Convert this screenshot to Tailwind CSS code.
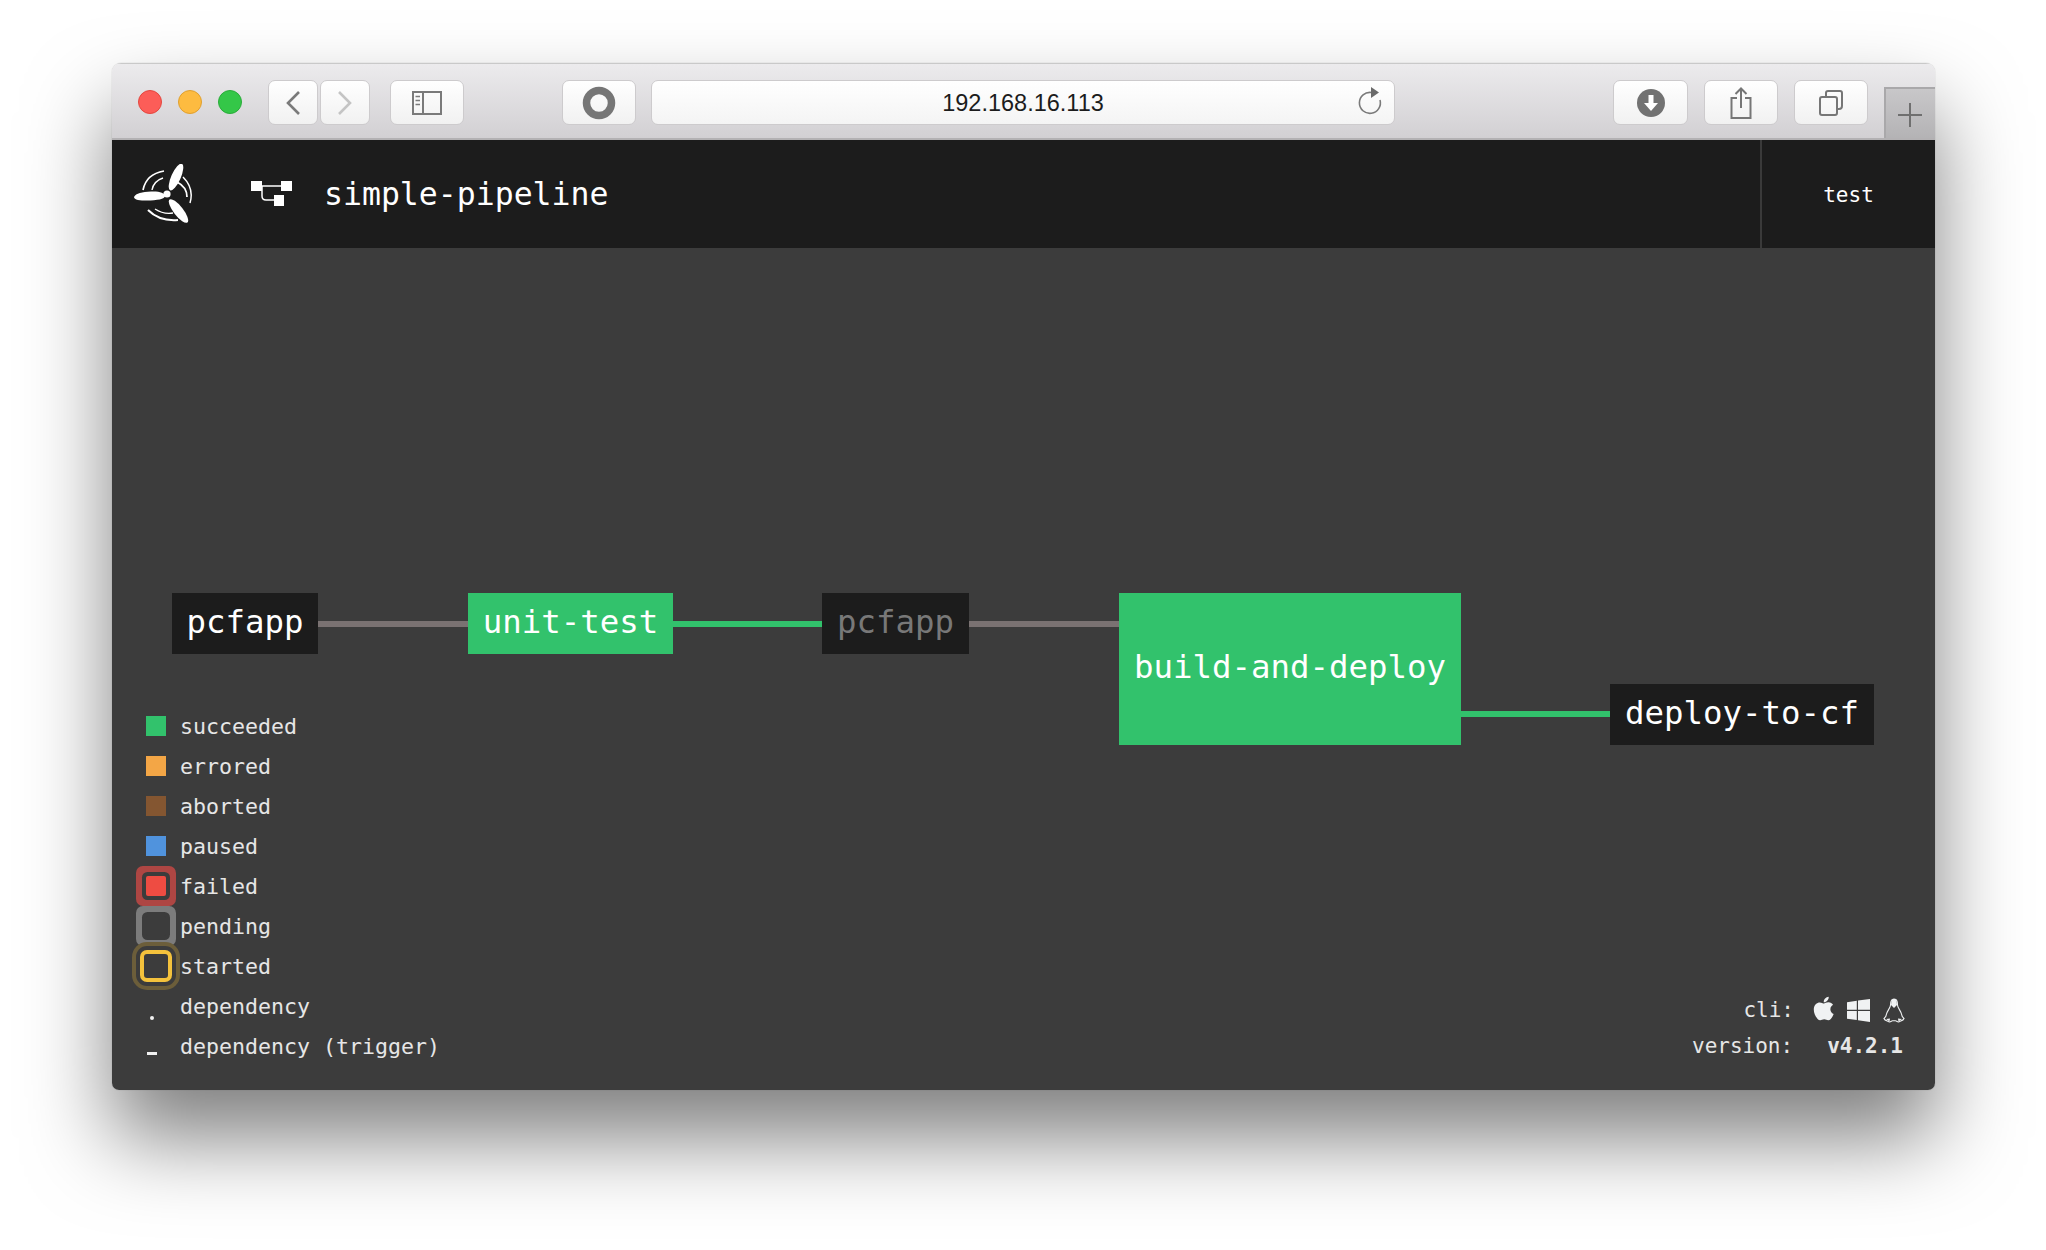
<!DOCTYPE html>
<html>
<head>
<meta charset="utf-8">
<script src="https://cdn.jsdelivr.net/npm/@tailwindcss/browser@4"></script>
</head>
<body class="bg-white">
<div class="w-[2046px] h-[1250px] overflow-hidden pt-[63px] pl-[112px] bg-white">
  <div class="w-[1823px] h-[1027px] rounded-t-[9px] rounded-b-[7px] shadow-[0_48px_84px_rgba(0,0,0,0.5),0_0_1px_rgba(0,0,0,0.35)]">
    <div class="w-full h-full rounded-t-[9px] rounded-b-[7px] overflow-hidden flex flex-col">
      <!-- title bar -->
      <div class="h-[77px] shrink-0 flex items-start pt-[16px] pl-[26px] bg-gradient-to-b from-[#ecebed] to-[#d2d0d3] border-b-2 border-[#b3b1b3] border-t border-t-[#c9c9c9] relative">
        <div class="flex gap-4 mt-[10px]">
          <div class="w-6 h-6 rounded-full bg-[#fc5d58] border border-[#e4473f]"></div>
          <div class="w-6 h-6 rounded-full bg-[#fdbb40] border border-[#e0a02f]"></div>
          <div class="w-6 h-6 rounded-full bg-[#34c748] border border-[#2aac3a]"></div>
        </div>
        <div class="ml-[26px] w-[50px] h-[45px] rounded-[7px] bg-gradient-to-b from-white to-[#f1f1f1] border border-[#cdcbcd] flex items-center justify-center">
          <svg width="16" height="26" viewBox="0 0 16 26" fill="none" stroke="#7a7a7a" stroke-width="2.6"><path d="M14 2 L3 13 L14 24"/></svg>
        </div>
        <div class="ml-[2px] w-[50px] h-[45px] rounded-[7px] bg-gradient-to-b from-white to-[#f1f1f1] border border-[#cdcbcd] flex items-center justify-center">
          <svg width="16" height="26" viewBox="0 0 16 26" fill="none" stroke="#c4c4c4" stroke-width="2.6"><path d="M2 2 L13 13 L2 24"/></svg>
        </div>
        <div class="ml-[20px] w-[74px] h-[45px] rounded-[7px] bg-gradient-to-b from-white to-[#f1f1f1] border border-[#cdcbcd] flex items-center justify-center">
          <svg width="30" height="24" viewBox="0 0 30 24" fill="none" stroke="#7a7a7a" stroke-width="2"><rect x="1" y="1" width="28" height="22"/><path d="M11 1 V23"/><path d="M3.5 5.5 H8 M3.5 9.5 H8 M3.5 13.5 H8" stroke-width="1.5"/></svg>
        </div>
        <div class="ml-[98px] w-[74px] h-[45px] rounded-[7px] bg-gradient-to-b from-white to-[#f1f1f1] border border-[#cdcbcd] flex items-center justify-center">
          <svg width="34" height="34" viewBox="0 0 34 34" fill="none" stroke="#767676" stroke-width="7.5"><circle cx="17" cy="17" r="12.5"/></svg>
        </div>
        <div class="ml-[15px] w-[744px] h-[45px] rounded-[7px] bg-gradient-to-b from-white to-[#f4f4f4] border border-[#cdcbcd] flex items-center justify-center relative">
          <span class="font-['Liberation_Sans',sans-serif] text-[#1c1c1c] text-[23.5px] leading-none pt-[2px]">192.168.16.113</span>
          <svg class="absolute right-[11px] top-[6px]" width="26" height="30" viewBox="0 0 26 30" fill="none"><path d="M14.5 5.5 A10.5 10.5 0 1 0 23 13" stroke="#7a7a7a" stroke-width="1.6"/><path d="M14 0 L22 5.5 L14 11 Z" fill="#6a6a6a"/></svg>
        </div>
        <div class="ml-[218px] w-[75px] h-[45px] rounded-[7px] bg-gradient-to-b from-white to-[#f1f1f1] border border-[#cdcbcd] flex items-center justify-center">
          <svg width="28" height="28" viewBox="0 0 28 28"><circle cx="14" cy="14" r="14" fill="#727272"/><path d="M11.5 6 H16.5 V14 H21 L14 22 L7 14 H11.5 Z" fill="#fff"/></svg>
        </div>
        <div class="ml-[16px] w-[74px] h-[45px] rounded-[7px] bg-gradient-to-b from-white to-[#f1f1f1] border border-[#cdcbcd] flex items-center justify-center">
          <svg width="22" height="32" viewBox="0 0 22 32" fill="none" stroke="#767676" stroke-width="2"><path d="M7 11 H1.5 V31 H20.5 V11 H15"/><path d="M11 21 V1.5 M5.5 7 L11 1.5 L16.5 7"/></svg>
        </div>
        <div class="ml-[16px] w-[74px] h-[45px] rounded-[7px] bg-gradient-to-b from-white to-[#f1f1f1] border border-[#cdcbcd] flex items-center justify-center">
          <svg width="24" height="26" viewBox="0 0 24 26" fill="none" stroke="#767676" stroke-width="2"><rect x="1" y="7" width="17" height="18" rx="2"/><path d="M7 7 V3 Q7 1 9 1 H21 Q23 1 23 3 V16 Q23 19 20 19 H18"/></svg>
        </div>
        <div class="absolute right-0 bottom-0 w-[51px] h-[51px] bg-gradient-to-b from-[#c8c7c9] to-[#b4b3b5] border-l-2 border-t-2 border-[#a9a8aa] flex items-center justify-center pt-[3px] pr-[2px]">
          <svg width="24" height="24" viewBox="0 0 24 24" fill="none" stroke="#6f6f6f" stroke-width="2"><path d="M12 0 V24 M0 12 H24"/></svg>
        </div>
      </div>
      <!-- header -->
      <div class="h-[108px] shrink-0 bg-[#1c1c1c] flex items-center">
        <svg class="ml-[21px]" width="60" height="60" viewBox="0 0 60 60" fill="none">
          <path d="M1 33 C3 29 9 28 18 27.500 C26 27 32 29 32 32 C32 35 24 36.500 14 36.500 C7 36.500 1 36 1 33 Z" fill="#fff"/>
          <ellipse cx="43" cy="13" rx="14.500" ry="4.700" fill="#fff" transform="rotate(-66 43 13)"/>
          <ellipse cx="45.500" cy="47" rx="14.500" ry="4.700" fill="#fff" transform="rotate(52 45.500 47)"/>
          <circle cx="34" cy="30" r="3.600" fill="#fff"/>
          <path d="M10 26 C12 16 19 9 31 7" stroke="#fff" stroke-width="1.700"/>
          <path d="M19 26 C20 20 24 16 30 14" stroke="#fff" stroke-width="1.400"/>
          <path d="M50 13 C57 20 60 29 57 39" stroke="#fff" stroke-width="1.500"/>
          <path d="M44 18 C50 21 54 26 54 33" stroke="#fff" stroke-width="1.800"/>
          <path d="M15 46 C22 53 33 57 45 56" stroke="#fff" stroke-width="2"/>
          <path d="M22 45 C28 49 34 50 40 49" stroke="#fff" stroke-width="1.300"/>
        </svg>
        <svg class="ml-[57px]" width="42" height="26" viewBox="0 0 42 26" fill="none">
          <rect x="1" y="0" width="11" height="10" fill="#fff"/><rect x="31" y="0" width="11" height="10" fill="#fff"/><rect x="24" y="14" width="10" height="11" fill="#fff"/>
          <path d="M11 5 H32" stroke="#fff" stroke-width="1.500"/><path d="M12 5 V15 Q12 19 16 19 H25" stroke="#fff" stroke-width="1.500"/>
        </svg>
        <span class="ml-[32px] font-['DejaVu_Sans_Mono',monospace] text-white text-[31.5px] leading-none pt-[2px]">simple-pipeline</span>
        <div class="ml-auto w-[175px] h-full border-l-2 border-[#3a3a3a] flex items-center justify-center">
          <span class="font-['DejaVu_Sans_Mono',monospace] text-white text-[21px] leading-none pt-[2px]">test</span>
        </div>
      </div>
      <!-- main -->
      <div class="flex-1 bg-[#3c3c3c] relative flex items-end justify-between font-['DejaVu_Sans_Mono',monospace] text-[#e6e6e6] text-[21.6px] pb-[24px] pl-[24px] pr-[29px]">
        <!-- pipeline canvas -->
        <div class="absolute left-[206px] top-[373px] w-[150px] h-[6px] bg-[#7a7272]"></div>
        <div class="absolute left-[561px] top-[373px] w-[149px] h-[6px] bg-[#32c26c]"></div>
        <div class="absolute left-[857px] top-[373px] w-[150px] h-[6px] bg-[#7a7272]"></div>
        <div class="absolute left-[1349px] top-[463px] w-[150px] h-[6px] bg-[#32c26c]"></div>
        <div class="absolute left-[60px] top-[345px] w-[146px] h-[61px] bg-[#1c1c1c] text-white text-[32.4px] leading-none flex items-center justify-center pb-[3px]">pcfapp</div>
        <div class="absolute left-[356px] top-[345px] w-[205px] h-[61px] bg-[#32c26c] text-white text-[32.4px] leading-none flex items-center justify-center pb-[3px]">unit-test</div>
        <div class="absolute left-[710px] top-[345px] w-[147px] h-[61px] bg-[#1c1c1c] text-[#787878] text-[32.4px] leading-none flex items-center justify-center pb-[3px]">pcfapp</div>
        <div class="absolute left-[1007px] top-[345px] w-[342px] h-[152px] bg-[#32c26c] text-white text-[32.4px] leading-none flex items-center justify-center pb-[3px]">build-and-deploy</div>
        <div class="absolute left-[1498px] top-[436px] w-[264px] h-[61px] bg-[#1c1c1c] text-white text-[32.4px] leading-none flex items-center justify-center pb-[3px]">deploy-to-cf</div>
        <!-- legend -->
        <div class="relative flex flex-col leading-none">
          <div class="h-10 flex items-center"><div class="w-10 flex justify-center"><div class="w-5 h-5 bg-[#32c26c]"></div></div><span class="ml-1 pt-[2px]">succeeded</span></div>
          <div class="h-10 flex items-center"><div class="w-10 flex justify-center"><div class="w-5 h-5 bg-[#f3a646]"></div></div><span class="ml-1 pt-[2px]">errored</span></div>
          <div class="h-10 flex items-center"><div class="w-10 flex justify-center"><div class="w-5 h-5 bg-[#845631]"></div></div><span class="ml-1 pt-[2px]">aborted</span></div>
          <div class="h-10 flex items-center"><div class="w-10 flex justify-center"><div class="w-5 h-5 bg-[#5093dd]"></div></div><span class="ml-1 pt-[2px]">paused</span></div>
          <div class="h-10 flex items-center"><div class="w-10 flex justify-center"><div class="w-5 h-5 rounded-[2px] bg-[#ee4c42] shadow-[0_0_0_4px_#3c3c3c,0_0_0_10px_#ae4643]"></div></div><span class="ml-1 pt-[2px]">failed</span></div>
          <div class="h-10 flex items-center"><div class="w-10 flex justify-center"><div class="w-5 h-5 rounded-[2px] bg-[#3c3c3c] shadow-[0_0_0_4px_#3c3c3c,0_0_0_10px_#7c7c7c]"></div></div><span class="ml-1 pt-[2px]">pending</span></div>
          <div class="h-10 flex items-center"><div class="w-10 flex justify-center"><div class="w-8 h-8 rounded-[7px] border-4 border-[#f4c23c] shadow-[0_0_0_4px_#3c3c3c,0_0_0_8px_#6c5e3a]"></div></div><span class="ml-1 pt-[2px]">started</span></div>
          <div class="h-10 flex items-center relative"><div class="absolute left-[14px] top-[30px] w-1 h-1 rounded-full bg-[#f0f0f0]"></div><span class="ml-[44px] pt-[2px]">dependency</span></div>
          <div class="h-10 flex items-center relative"><div class="absolute left-[11px] top-[26px] w-[10px] h-[3px] bg-[#f0f0f0]"></div><span class="ml-[44px] pt-[2px]">dependency (trigger)</span></div>
        </div>
        <!-- cli and version -->
        <div class="relative flex flex-col items-end leading-none mb-[2px] text-[21px]">
          <div class="h-9 flex items-center pr-[1px]">
            <span class="mr-[19px]">cli:</span>
            <svg width="21" height="27" viewBox="0 0 376 512" fill="#f0f2f3" class="mb-[4px]"><path d="M318.7 268.7c-.2-36.7 16.4-64.4 50-84.8-18.8-26.9-47.2-41.7-84.7-44.6-35.5-2.8-74.3 20.7-88.5 20.7-15 0-49.4-19.7-76.4-19.7C63.3 141.2 4 184.8 4 273.5q0 39.3 14.4 81.2c12.8 36.7 59 126.7 107.2 125.2 25.2-.6 43-17.9 75.8-17.9 31.8 0 48.3 17.9 76.4 17.9 48.6-.7 90.4-82.5 102.6-119.3-65.2-30.7-61.7-90-61.7-91.9zm-56.6-164.2c27.3-32.4 24.8-61.9 24-72.5-24.1 1.4-52 16.4-67.9 34.9-17.5 19.8-27.8 44.3-25.6 71.9 26.1 2 49.9-11.4 69.5-34.3z"/></svg>
            <svg class="ml-[13px]" width="23" height="23" viewBox="0 0 23 23" fill="#f0f2f3"><path d="M0 3.2 L9.800 1.800 V10.800 H0 Z M11 1.600 L23 0 V10.800 H11 Z M0 12 H9.800 V21 L0 19.700 Z M11 12 H23 V23 L11 21.300 Z"/></svg>
            <svg class="ml-[13px]" width="22" height="25" viewBox="0 0 22 25" fill="none" stroke="#f0f2f3" stroke-width="1.100">
              <path d="M11 1 C7.800 1 7.500 4 7.500 7 C7.500 10 3.800 13 3.200 17 C3.200 18.500 2 19.500 1 20.500 C1.500 22.500 4.500 23 6.500 24 C8 24 8.500 22.800 9.500 22.800 H12.500 C13.500 22.800 14 24 15.500 24 C17.500 23 20.500 22.500 21 20.500 C20 19.500 18.800 18.500 18.800 17 C18.200 13 14.500 10 14.500 7 C14.500 4 14.200 1 11 1 Z"/>
              <path d="M8.500 1.800 C9.500 0.800 12.500 0.800 13.500 1.800 L14 7 L11 10 L8 7 Z" fill="#f0f2f3" stroke="none"/>
              <path d="M3 21 L7 20.500 L6.500 23.500 Z M19 21 L15 20.500 L15.500 23.500 Z" fill="#f0f2f3" stroke="none"/>
            </svg>
          </div>
          <div class="h-9 flex items-center pr-[3px]"><span class="mr-[34px]">version:</span><span class="font-bold">v4.2.1</span></div>
        </div>
      </div>
    </div>
  </div>
</div>
</body>
</html>
